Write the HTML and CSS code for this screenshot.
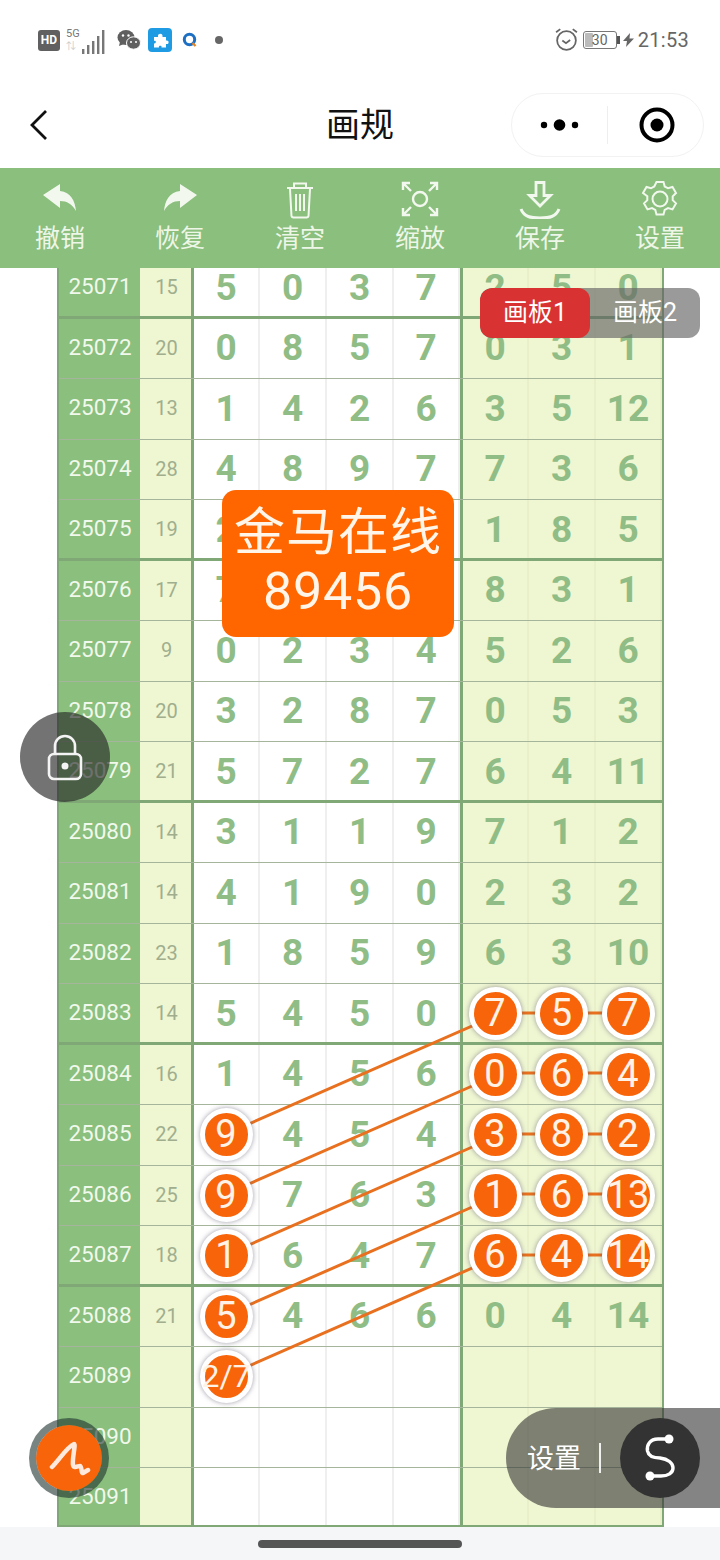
FILE: index.html
```html
<!DOCTYPE html>
<html lang="zh">
<head>
<meta charset="utf-8">
<title>画规</title>
<link rel="stylesheet" href="styles.css">
</head>
<body>
<div class="phone">
  <header class="status">
    <div class="status-left">
      <span class="hd">HD</span>
      <span class="net"><span class="net-5g">5G</span><span class="net-sub">⇅</span></span>
      <svg class="signal" width="24" height="24" viewBox="0 0 24 24"><g fill="#777"><rect x="1" y="19" width="2.4" height="5"/><rect x="6" y="15" width="2.4" height="9"/><rect x="11" y="11" width="2.4" height="13"/><rect x="16" y="6" width="2.4" height="18"/><rect x="21" y="0" width="2.4" height="24"/></g></svg>
      <svg class="wechat" width="24" height="22" viewBox="0 0 24 22"><ellipse cx="9" cy="8.5" rx="8.5" ry="7.5" fill="#5f5f5f"/><path d="M3 13l-1 4 5-2z" fill="#5f5f5f"/><ellipse cx="16.5" cy="14" rx="7" ry="6.2" fill="#5f5f5f" stroke="#fff"/><circle cx="6" cy="6.5" r="1.2" fill="#fff"/><circle cx="11.5" cy="6.5" r="1.2" fill="#fff"/><circle cx="14" cy="13" r="1" fill="#fff"/><circle cx="19" cy="13" r="1" fill="#fff"/></svg>
      <svg class="puzzle" width="24" height="24" viewBox="0 0 24 24"><rect width="24" height="24" rx="4" fill="#1f9be4"/><path d="M6 9H10C9 4.500 15.500 4.500 14.500 9H18V12.500C21.500 11.500 21.500 17 18 16V19.500H13.500C14.500 17 10 17 11 19.500H6V15.500C8.500 16 8.500 12 6 13z" fill="#fff"/></svg>
      <svg class="qq" width="16" height="16" viewBox="0 0 16 16"><circle cx="7.500" cy="7.500" r="5.200" fill="none" stroke="#1d6fc4" stroke-width="3"/><path d="M10.500 11l3 3" stroke="#e8821e" stroke-width="2.400"/></svg>
      <span class="dot"></span>
    </div>
    <div class="status-right">
      <svg class="alarm" width="25" height="25" viewBox="0 0 24 24" fill="none" stroke="#666" stroke-width="1.700"><circle cx="12" cy="13" r="9"/><path d="M8 13l3.500 2.500L15.500 12.500M2 5l4-3M22 5l-4-3"/></svg>
      <span class="battery"><span class="battery-fill"></span><span class="battery-num">30</span></span>
      <span class="battery-cap"></span>
      <svg class="bolt" width="11" height="14" viewBox="0 0 11 14"><path d="M7 0L0 8h4l-1 6 8-8.500H6.500z" fill="#666"/></svg>
      <span class="time">21:53</span>
    </div>
  </header>

  <nav class="navbar">
    <svg class="back" width="20" height="34" viewBox="0 0 20 34" fill="none" stroke="#111" stroke-width="2.800"><path d="M17 3L3 17l14 14"/></svg>
    <h1 class="title">画规</h1>
    <div class="capsule">
      <svg class="more" width="40" height="16" viewBox="0 0 40 16"><circle cx="4" cy="8" r="3.200"/><circle cx="19.500" cy="8" r="5.800"/><circle cx="35" cy="8" r="3.200"/></svg>
      <span class="capsule-line"></span>
      <svg class="target" width="36" height="36" viewBox="0 0 36 36"><circle cx="18" cy="18" r="15.500" fill="none" stroke="#000" stroke-width="4"/><circle cx="18" cy="18" r="6.500"/></svg>
    </div>
  </nav>

  <div class="toolbar">
    <div class="tool">
      <svg class="tool-icon" width="40" height="36" viewBox="0 0 40 36"><path d="M3 13L20 2v7c11 1 15 10 16 20-4-7-9-10-16-10v7z" fill="#f2f8ee"/></svg>
      <span>撤销</span>
    </div>
    <div class="tool">
      <svg class="tool-icon" width="40" height="36" viewBox="0 0 40 36"><path d="M37 13L20 2v7C9 10 5 19 4 29c4-7 9-10 16-10v7z" fill="#f2f8ee"/></svg>
      <span>恢复</span>
    </div>
    <div class="tool">
      <svg class="tool-icon" width="40" height="38" viewBox="0 0 40 38" fill="none" stroke="#f2f8ee" stroke-width="2"><path d="M7 7h26M14 7V2.500h12V7M10 8l1.500 27a2 2 0 0 0 2 1.500h13a2 2 0 0 0 2-1.500L30 8M16 13v17M20 13v17M24 13v17"/></svg>
      <span>清空</span>
    </div>
    <div class="tool">
      <svg class="tool-icon" width="40" height="38" viewBox="0 0 40 38" fill="none" stroke="#f2f8ee" stroke-width="2.400"><circle cx="20" cy="18" r="7"/><path d="M3 9V2h7M4 3l7 7M37 9V2h-7M36 3l-7 7M3 27v7h7M4 33l7-7M37 27v7h-7M36 33l-7-7"/></svg>
      <span>缩放</span>
    </div>
    <div class="tool">
      <svg class="tool-icon" width="42" height="38" viewBox="0 0 42 38" fill="none" stroke="#f2f8ee" stroke-width="2.800"><path d="M17 1.500h8v13h6.500L21 25 10.500 14.500H17z"/><path d="M2 28c3 8 10 9 19 9s16-1 19-9" stroke-width="3"/></svg>
      <span>保存</span>
    </div>
    <div class="tool">
      <svg class="tool-icon" width="40" height="38" viewBox="0 0 40 38" fill="none" stroke="#f2f8ee" stroke-width="2"><circle cx="20" cy="18" r="7.500"/><path d="M16.500 1h7l1.200 4.500 3.300 1.800 4.500-1.300 3.500 6-3.300 3.300v3.800l3.300 3.300-3.500 6-4.500-1.300-3.300 1.800-1.200 4.500h-7l-1.200-4.500-3.300-1.800-4.500 1.300-3.500-6 3.300-3.300v-3.800L3 12l3.500-6L11 7.300l3.300-1.800z"/></svg>
      <span>设置</span>
    </div>
  </div>

  <main class="board">
    <div class="table">
      <div class="row thick"><div class="issue">25071</div><div class="sum">15</div><div class="cell gl">5</div><div class="cell">0</div><div class="cell">3</div><div class="cell">7</div><div class="cell gr">2</div><div class="cell gc">5</div><div class="cell gc">0</div></div>
      <div class="row"><div class="issue">25072</div><div class="sum">20</div><div class="cell gl">0</div><div class="cell">8</div><div class="cell">5</div><div class="cell">7</div><div class="cell gr">0</div><div class="cell gc">3</div><div class="cell gc">1</div></div>
      <div class="row"><div class="issue">25073</div><div class="sum">13</div><div class="cell gl">1</div><div class="cell">4</div><div class="cell">2</div><div class="cell">6</div><div class="cell gr">3</div><div class="cell gc">5</div><div class="cell gc">12</div></div>
      <div class="row"><div class="issue">25074</div><div class="sum">28</div><div class="cell gl">4</div><div class="cell">8</div><div class="cell">9</div><div class="cell">7</div><div class="cell gr">7</div><div class="cell gc">3</div><div class="cell gc">6</div></div>
      <div class="row thick"><div class="issue">25075</div><div class="sum">19</div><div class="cell gl">2</div><div class="cell">6</div><div class="cell">4</div><div class="cell">7</div><div class="cell gr">1</div><div class="cell gc">8</div><div class="cell gc">5</div></div>
      <div class="row"><div class="issue">25076</div><div class="sum">17</div><div class="cell gl">7</div><div class="cell">1</div><div class="cell">2</div><div class="cell">7</div><div class="cell gr">8</div><div class="cell gc">3</div><div class="cell gc">1</div></div>
      <div class="row"><div class="issue">25077</div><div class="sum">9</div><div class="cell gl">0</div><div class="cell">2</div><div class="cell">3</div><div class="cell">4</div><div class="cell gr">5</div><div class="cell gc">2</div><div class="cell gc">6</div></div>
      <div class="row"><div class="issue">25078</div><div class="sum">20</div><div class="cell gl">3</div><div class="cell">2</div><div class="cell">8</div><div class="cell">7</div><div class="cell gr">0</div><div class="cell gc">5</div><div class="cell gc">3</div></div>
      <div class="row thick"><div class="issue">25079</div><div class="sum">21</div><div class="cell gl">5</div><div class="cell">7</div><div class="cell">2</div><div class="cell">7</div><div class="cell gr">6</div><div class="cell gc">4</div><div class="cell gc">11</div></div>
      <div class="row"><div class="issue">25080</div><div class="sum">14</div><div class="cell gl">3</div><div class="cell">1</div><div class="cell">1</div><div class="cell">9</div><div class="cell gr">7</div><div class="cell gc">1</div><div class="cell gc">2</div></div>
      <div class="row"><div class="issue">25081</div><div class="sum">14</div><div class="cell gl">4</div><div class="cell">1</div><div class="cell">9</div><div class="cell">0</div><div class="cell gr">2</div><div class="cell gc">3</div><div class="cell gc">2</div></div>
      <div class="row"><div class="issue">25082</div><div class="sum">23</div><div class="cell gl">1</div><div class="cell">8</div><div class="cell">5</div><div class="cell">9</div><div class="cell gr">6</div><div class="cell gc">3</div><div class="cell gc">10</div></div>
      <div class="row thick"><div class="issue">25083</div><div class="sum">14</div><div class="cell gl">5</div><div class="cell">4</div><div class="cell">5</div><div class="cell">0</div><div class="cell gr"><b class="ball">7</b></div><div class="cell gc"><b class="ball">5</b></div><div class="cell gc"><b class="ball">7</b></div></div>
      <div class="row"><div class="issue">25084</div><div class="sum">16</div><div class="cell gl">1</div><div class="cell">4</div><div class="cell">5</div><div class="cell">6</div><div class="cell gr"><b class="ball">0</b></div><div class="cell gc"><b class="ball">6</b></div><div class="cell gc"><b class="ball">4</b></div></div>
      <div class="row"><div class="issue">25085</div><div class="sum">22</div><div class="cell gl"><b class="ball">9</b></div><div class="cell">4</div><div class="cell">5</div><div class="cell">4</div><div class="cell gr"><b class="ball">3</b></div><div class="cell gc"><b class="ball">8</b></div><div class="cell gc"><b class="ball">2</b></div></div>
      <div class="row"><div class="issue">25086</div><div class="sum">25</div><div class="cell gl"><b class="ball">9</b></div><div class="cell">7</div><div class="cell">6</div><div class="cell">3</div><div class="cell gr"><b class="ball">1</b></div><div class="cell gc"><b class="ball">6</b></div><div class="cell gc"><b class="ball">13</b></div></div>
      <div class="row thick"><div class="issue">25087</div><div class="sum">18</div><div class="cell gl"><b class="ball">1</b></div><div class="cell">6</div><div class="cell">4</div><div class="cell">7</div><div class="cell gr"><b class="ball">6</b></div><div class="cell gc"><b class="ball">4</b></div><div class="cell gc"><b class="ball">14</b></div></div>
      <div class="row"><div class="issue">25088</div><div class="sum">21</div><div class="cell gl"><b class="ball">5</b></div><div class="cell">4</div><div class="cell">6</div><div class="cell">6</div><div class="cell gr">0</div><div class="cell gc">4</div><div class="cell gc">14</div></div>
      <div class="row"><div class="issue">25089</div><div class="sum"></div><div class="cell gl"><b class="ball small">2/7</b></div><div class="cell"></div><div class="cell"></div><div class="cell"></div><div class="cell gr"></div><div class="cell gc"></div><div class="cell gc"></div></div>
      <div class="row"><div class="issue">25090</div><div class="sum"></div><div class="cell gl"></div><div class="cell"></div><div class="cell"></div><div class="cell"></div><div class="cell gr"></div><div class="cell gc"></div><div class="cell gc"></div></div>
      <div class="row thick last"><div class="issue">25091</div><div class="sum"></div><div class="cell gl"></div><div class="cell"></div><div class="cell"></div><div class="cell"></div><div class="cell gr"></div><div class="cell gc"></div><div class="cell gc"></div></div>
    </div>

    <svg class="lines" width="720" height="1259" viewBox="0 268 720 1259" fill="none" stroke="#e8701e" stroke-width="3">
      <path d="M226 1134L495 1016M226 1194L495 1076M226 1255L495 1137M226 1315L495 1197M226 1376L495 1258"/>
      <path d="M495 1013H629M495 1073H629M495 1134H629M495 1194H629M495 1255H629"/>
    </svg>

    <div class="tabs">
      <span class="tab active">画板1</span>
      <span class="tab">画板2</span>
    </div>

    <div class="notice">
      <div class="notice-cn">金马在线</div>
      <div class="notice-num">89456</div>
    </div>

    <div class="lock">
      <svg width="36" height="48" viewBox="0 0 36 48" fill="none" stroke="#f4f4f4" stroke-width="2.600"><path d="M8 20V12a10 10 0 0 1 20 0v8"/><rect x="2" y="20" width="32" height="25" rx="5"/><circle cx="18" cy="32" r="3.500" fill="#f4f4f4" stroke="none"/></svg>
    </div>

    <div class="brush">
      <svg width="44" height="44" viewBox="0 0 44 44" fill="none" stroke="#ffe9dc" stroke-width="4.500" stroke-linecap="round" stroke-linejoin="round"><path d="M5 31C12 24 20 11 27 8C29 8 25 22 26 29C27 33 31 30 33 30C35 30 34 38 36 37L41 34"/></svg>
    </div>

    <div class="settings">
      <span class="settings-label">设置</span>
      <span class="settings-line"></span>
      <span class="settings-btn">
        <svg width="38" height="50" viewBox="0 0 38 50" fill="none" stroke="#fff" stroke-width="3.400"><path d="M28 6H17C9 6 5.500 12 6.500 18C7.500 23 12 25 19 25C27 26 32 30 32 35C32 40 27 43 20 43H9"/><circle cx="28" cy="6" r="4.500" fill="#fff" stroke="none"/><circle cx="9" cy="43" r="4.500" fill="#fff" stroke="none"/></svg>
      </span>
    </div>
  </main>

  <footer class="homebar"><span class="home-pill"></span></footer>
</div>
</body>
</html>
```
FILE: styles.css
```css
* { box-sizing: border-box; }
html, body { margin: 0; padding: 0; }
body {
  width: 720px;
  height: 1560px;
  overflow: hidden;
  background: #fff;
  font-family: Roboto, "Noto Sans CJK SC", sans-serif;
}
.phone { width: 720px; height: 1560px; display: flex; flex-direction: column; }

/* status bar */
.status {
  height: 80px;
  flex: none;
  display: flex;
  justify-content: space-between;
  align-items: center;
  padding: 0 31px 0 38px;
  color: #666;
}
.status-left, .status-right { display: flex; align-items: center; }
.hd {
  width: 22px; height: 21px; border-radius: 3px; background: #606060; color: #fff;
  font-size: 12px; font-weight: 700; line-height: 21px; text-align: center;
}
.net { width: 16px; margin-left: 6px; display: flex; flex-direction: column; line-height: 10px; }
.net-5g { font-size: 11px; color: #777; }
.net-sub { font-size: 10px; color: #ccc; margin-top: 3px; }
.signal { margin-left: -1px; margin-top: 4px; }
.wechat { margin-left: 12px; }
.puzzle { margin-left: 7px; }
.qq { margin-left: 10px; }
.dot { width: 8px; height: 8px; border-radius: 50%; background: #666; margin-left: 17px; }
.alarm { margin-right: 4px; margin-top: -2px; }
.battery {
  position: relative;
  width: 34px; height: 18px; border: 1px solid #777; border-radius: 3px;
  font-size: 14px; line-height: 16px; text-align: center; color: #666;
}
.battery-fill { display: block; width: 8px; height: 14px; margin: 1px; background: #bbb; border-radius: 1px; }
.battery-num { position: absolute; left: 0; right: 0; top: 0; }
.battery-cap { width: 3px; height: 8px; background: #555; margin-right: 3px; }
.bolt { margin-right: 4px; }
.time { font-size: 20px; letter-spacing: .3px; color: #666; }

/* navigation */
.navbar {
  position: relative;
  height: 88px;
  flex: none;
  display: flex;
  align-items: center;
  justify-content: space-between;
  padding: 2px 16px 0 29px;
}
.title {
  position: absolute; left: 0; right: 0; top: 22px; margin: 0;
  font-size: 34px; font-weight: 400; color: #111; text-align: center; line-height: 46px;
}
.capsule {
  width: 193px; height: 64px; border: 1px solid #f2f2f2; border-radius: 32px;
  display: flex; align-items: center; padding-left: 28px;
}
.more { flex: none; }
.capsule-line { width: 1px; height: 38px; background: #eee; margin-left: 27px; }
.target { margin-left: 31px; }

/* toolbar */
.toolbar {
  height: 100px;
  flex: none;
  background: #8abf7d;
  display: grid;
  grid-template-columns: repeat(6, 120px);
  color: #eef6e8;
  font-size: 25px;
}
.tool { display: flex; flex-direction: column; align-items: center; padding-top: 13px; }
.tool-icon { height: 38px; flex: none; }
.tool span { line-height: 34px; margin-top: 3px; }

/* board */
.board { position: relative; height: 1259px; flex: none; overflow: hidden; }
.table {
  width: 607px;
  margin: -10px 0 0 57px;
  border-left: 2px solid #7fa876;
  border-right: 2px solid #7fa876;
}
.row {
  height: 60.5px;
  display: grid;
  grid-template-columns: 81px 51px 69px 67px 67px 66px 69px 67px 66px;
  border-bottom: 1px solid #a5b59b;
}
.row.thick { border-bottom: 3px solid #7fa876; }
.row.last { height: 59.5px; }
.row > div { display: flex; align-items: center; justify-content: center; padding-bottom: 1px; }
.row.thick > div { padding-top: 2px; }
.row > .issue { background: #8abf7d; color: #f1f8ec; font-size: 22.5px; padding-left: 1px; padding-bottom: 3px; }
.sum { background: #eff6d2; color: #a0ae8e; font-size: 20px; padding-left: 2px; }
.cell {
  background: #fff;
  color: #8fbd85;
  font-size: 37px;
  font-weight: 700;
  border-right: 2px solid #efefef;
}
.gl { border-left: 3px solid #7fa876; }
.gr, .gc { background: #eff6d2; border-right-color: #e8efc9; }
.gr { border-left: 3px solid #7fa876; }
.ball {
  position: relative;
  z-index: 2;
  flex: none;
  width: 53px;
  height: 53px;
  margin-top: 1px;
  border: 5px solid #fff;
  border-radius: 50%;
  background: #f7640a;
  color: #fff2e6;
  font-size: 38px;
  font-weight: 400;
  line-height: 43px;
  text-align: center;
  box-shadow: 0 0 5px rgba(90, 90, 110, .6);
  display: flex;
  justify-content: center;
  white-space: nowrap;
}
.ball.small { font-size: 32px; }
.lines { position: absolute; left: 0; top: 0; z-index: 1; }

/* overlays */
.tabs {
  position: absolute; z-index: 3; left: 480px; top: 20px;
  display: flex; width: 220px; height: 50px;
  border-radius: 12px; overflow: hidden;
  background: rgba(100, 100, 100, .65);
  color: #fff; font-size: 25px;
}
.tab { flex: 1; line-height: 50px; text-align: center; }
.tab.active { background: #d83232; border-radius: 12px; }
.notice {
  position: absolute; z-index: 3; left: 222px; top: 222px;
  width: 232px; height: 147px;
  border-radius: 14px; background: #ff6600; color: #fff5e8; text-align: center;
}
.notice-cn { font-size: 51px; line-height: 52px; margin-top: 17px; letter-spacing: 1px; }
.notice-num { font-size: 52px; line-height: 62px; margin-top: 2px; letter-spacing: .8px; }
.lock {
  position: absolute; z-index: 3; left: 20px; top: 444px;
  width: 90px; height: 90px; border-radius: 50%;
  background: rgba(40, 40, 40, .65);
  display: flex; align-items: center; justify-content: center;
  padding-top: 2px;
}
.brush {
  position: absolute; z-index: 3; left: 29px; top: 1150px;
  width: 80px; height: 80px; border-radius: 50%;
  background: #f7640a;
  background-clip: padding-box;
  border: 7px solid rgba(30, 50, 45, .6);
  display: flex; align-items: center; justify-content: center;
}
.settings {
  position: absolute; z-index: 3; left: 506px; top: 1140px;
  width: 214px; height: 100px;
  border-radius: 50px 0 0 50px;
  background: rgba(50, 50, 50, .6);
  display: flex; align-items: center;
  padding-left: 21px;
  color: #fff; font-size: 27px;
}
.settings-label { margin-top: -3px; }
.settings-line { width: 2px; height: 30px; background: #f0f0f0; margin-left: 18px; }
.settings-btn {
  width: 80px; height: 80px; border-radius: 50%; background: #333;
  margin-left: 19px; flex: none;
  display: flex; align-items: center; justify-content: center;
}

/* home indicator */
.homebar {
  flex: 1;
  background: #f5f6f8;
  display: flex; align-items: center; justify-content: center;
  padding-top: 1px;
}
.home-pill { width: 204px; height: 8px; border-radius: 4px; background: #555; }
```
